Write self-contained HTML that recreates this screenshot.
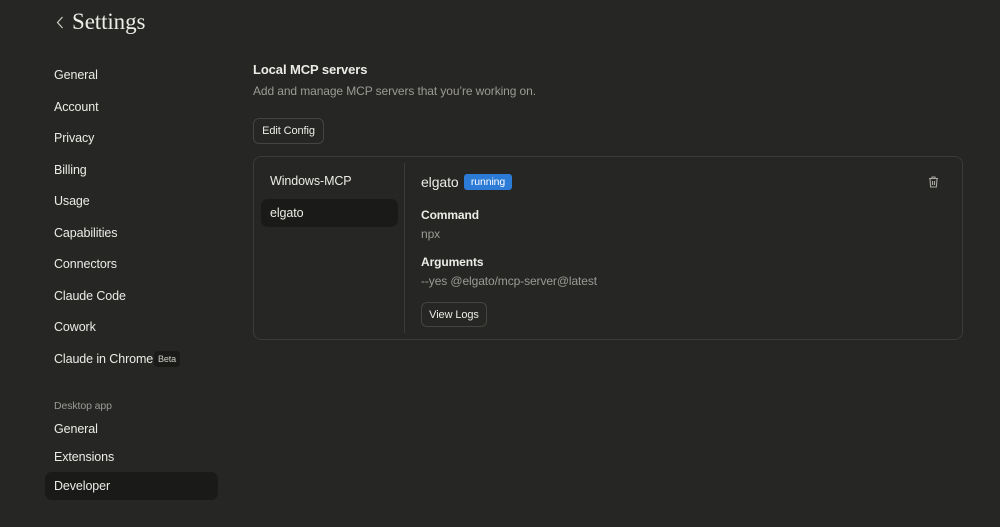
<!DOCTYPE html>
<html><head><style>
*{margin:0;padding:0;box-sizing:border-box}
body{width:1000px;height:527px;background:#262624;color:#ecebe6;font-family:"Liberation Sans",sans-serif;font-size:12px;letter-spacing:-0.1px;position:relative;overflow:hidden}
.a{position:absolute;white-space:nowrap}
.nav{left:54px;line-height:16px;font-size:12.5px}
.muted{color:#9b9a95}
.btn{position:absolute;border:1px solid #45443f;border-radius:6px;background:#262624;font-size:11px;display:flex;align-items:center;justify-content:center}
</style></head><body>
<svg class="a" style="left:56px;top:16px" width="8" height="13" viewBox="0 0 8 13" fill="none" stroke="#cfcdc6" stroke-width="1.2"><path d="M6.5 1L1.5 6.5L6.5 12"/></svg>
<div class="a" style="left:72px;top:9px;font-family:'Liberation Serif',serif;font-size:23px;color:#ecebe6">Settings</div>

<div class="a nav" style="top:67px">General</div>
<div class="a nav" style="top:99px">Account</div>
<div class="a nav" style="top:130px">Privacy</div>
<div class="a nav" style="top:162px">Billing</div>
<div class="a nav" style="top:193px">Usage</div>
<div class="a nav" style="top:225px">Capabilities</div>
<div class="a nav" style="top:256px">Connectors</div>
<div class="a nav" style="top:288px">Claude Code</div>
<div class="a nav" style="top:319px">Cowork</div>
<div class="a nav" style="top:351px">Claude in Chrome</div>
<div class="a" style="left:154px;top:351px;width:26px;height:16px;background:#1a1a18;border-radius:4px;font-size:9px;line-height:16px;text-align:center;color:#cfcdc6">Beta</div>
<div class="a nav muted" style="top:398px;font-size:10.5px">Desktop app</div>
<div class="a nav" style="top:421px">General</div>
<div class="a nav" style="top:449px">Extensions</div>
<div class="a" style="left:45px;top:472px;width:173px;height:28px;background:#1a1a18;border-radius:7px"></div>
<div class="a nav" style="top:478px">Developer</div>

<div class="a" style="left:253px;top:62px;font-size:13px;font-weight:bold">Local MCP servers</div>
<div class="a muted" style="left:253px;top:84px;font-size:12px">Add and manage MCP servers that you’re working on.</div>
<div class="btn" style="left:253px;top:118px;width:71px;height:26px">Edit Config</div>

<div class="a" style="left:253px;top:156px;width:710px;height:184px;border:1px solid #3c3b37;border-radius:8px"></div>
<div class="a" style="left:404px;top:163px;width:1px;height:170px;background:#3c3b37"></div>
<div class="a" style="left:270px;top:174px;font-size:12.5px">Windows-MCP</div>
<div class="a" style="left:261px;top:199px;width:137px;height:28px;background:#1a1a18;border-radius:7px"></div>
<div class="a" style="left:270px;top:206px;font-size:12.5px">elgato</div>

<div class="a" style="left:421px;top:174px;font-size:14px">elgato</div>
<div class="a" style="left:464px;top:174px;width:48px;height:16px;background:#2c7bd6;border-radius:3px;font-size:10.5px;line-height:16px;text-align:center;color:#fff">running</div>
<svg class="a" style="left:928px;top:176px" width="11" height="12" viewBox="0 0 11 12" fill="none" stroke="#a8a7a2" stroke-width="1.1"><path d="M1 2.5h9M4 2.5V1h3v1.5M2 2.5l.6 8.5h5.8l.6-8.5M4.5 5v4M6.5 5v4"/></svg>
<div class="a" style="left:421px;top:208px;font-weight:bold">Command</div>
<div class="a muted" style="left:421px;top:227px">npx</div>
<div class="a" style="left:421px;top:255px;font-weight:bold">Arguments</div>
<div class="a muted" style="left:421px;top:274px">--yes @elgato/mcp-server@latest</div>
<div class="btn" style="left:421px;top:302px;width:66px;height:25px">View Logs</div>
</body></html>
